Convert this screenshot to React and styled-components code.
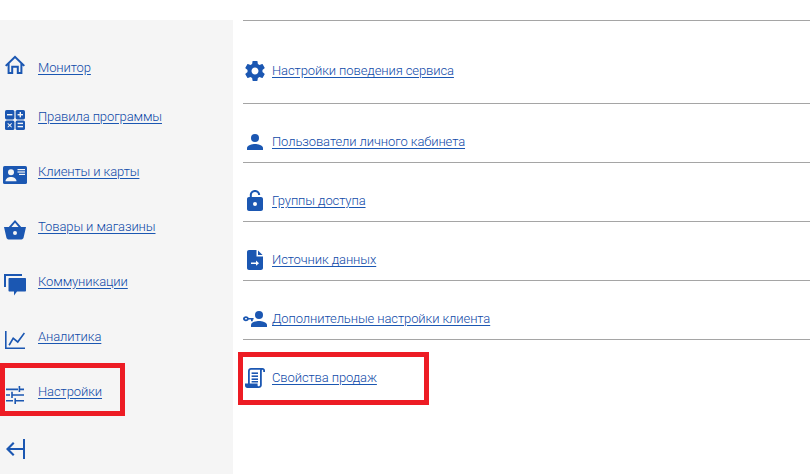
import React from "react";
import styled, { createGlobalStyle } from "styled-components";

const BLUE = "#1b57b2";
const PANEL = "#f5f5f5";

const Global = createGlobalStyle`
  html, body { margin: 0; padding: 0; background: #fff; }
  body { font-family: Roboto, "Liberation Sans", sans-serif; overflow: hidden; }
`;

const Page = styled.div`
  position: relative;
  width: 810px;
  height: 474px;
  display: flex;
  overflow: hidden;
`;

const Sidebar = styled.nav`
  width: 233px;
  height: 454px;
  margin-top: 20px;
  padding-top: 17px;
  box-sizing: border-box;
  background: ${PANEL};
  flex: none;
`;

const NavRow = styled.div`
  height: 55px;
  display: flex;
  align-items: center;
`;

const NavIcon = styled.span`
  width: 30px;
  margin-right: 8px;
  display: flex;
  justify-content: center;
  position: relative;
  top: ${(p) => p.$shift || 0}px;
  flex: none;
  svg { display: block; }
`;

const Link = styled.a`
  font-size: 13px;
  font-weight: 300;
  letter-spacing: -0.1px;
  line-height: 16px;
  color: #0f4aa8;
  text-decoration: underline;
  text-decoration-color: ${BLUE};
  text-underline-offset: 2px;
  position: relative;
  top: ${(p) => p.$shift || 0}px;
  cursor: pointer;
`;

const Main = styled.main`
  flex: 1;
  margin: 20px 0 0 10px;
`;

const MainRow = styled.div`
  height: ${(p) => (p.$first ? 83 : 59)}px;
  border-top: 1px solid #a5a5a5;
  display: flex;
  align-items: flex-end;
  padding-bottom: ${(p) => (p.$first ? 24 : 12)}px;
  box-sizing: border-box;
`;

const RowIcon = styled.span`
  width: 24px;
  height: 24px;
  margin-right: 5px;
  flex: none;
  display: flex;
  align-items: center;
  justify-content: center;
  margin-bottom: ${(p) => p.$lift ?? -4}px;
  svg { display: block; }
`;

const Marker = styled.div`
  position: absolute;
  left: ${(p) => p.$x}px;
  top: ${(p) => p.$y}px;
  width: ${(p) => p.$w}px;
  height: ${(p) => p.$h}px;
  border: 5px solid #ed1c24;
  box-sizing: border-box;
  pointer-events: none;
`;

const Svg = ({ w = 24, h = 24, vb = "0 0 24 24", children }) => (
  <svg width={w} height={h} viewBox={vb} fill={BLUE}>{children}</svg>
);

const HomeIcon = () => (
  <Svg w={20} h={20} vb="0 0 20 20">
    <path d="M10 0.4 L0 10.2 L1.4 11.6 L2.6 10.4 V19 H8.2 V12.8 H11.8 V19 H17.4 V10.4 L18.6 11.6 L20 10.2 Z M10 3.2 L15.4 8.5 V17 H13.8 V10.8 H6.2 V17 H4.6 V8.5 Z" />
  </Svg>
);

const AppsIcon = () => (
  <Svg w={20} h={20} vb="0 0 20 20">
    <rect x="0" y="0" width="9.4" height="9.4" rx="1.6" />
    <rect x="10.6" y="0" width="9.4" height="9.4" rx="1.6" />
    <rect x="0" y="10.6" width="9.4" height="9.4" rx="1.6" />
    <rect x="10.6" y="10.6" width="9.4" height="9.4" rx="1.6" />
    <g fill={PANEL}>
      <rect x="2" y="4" width="5.4" height="1.4" />
      <rect x="12.6" y="4" width="5.4" height="1.4" />
      <rect x="14.6" y="2" width="1.4" height="5.4" />
      <rect x="12.6" y="12.7" width="5.4" height="1.4" />
      <rect x="12.6" y="15.9" width="5.4" height="1.4" />
      <path d="M3 13 L4.7 14.6 L6.4 13 L7 13.7 L5.4 15.3 L7 16.9 L6.4 17.6 L4.7 16 L3 17.6 L2.4 16.9 L4 15.3 L2.4 13.7 Z" />
    </g>
  </Svg>
);

const CardIcon = () => (
  <Svg w={24} h={18} vb="0 0 24 18">
    <rect x="0" y="0" width="24" height="18" rx="1.6" />
    <g fill={PANEL}>
      <circle cx="8" cy="6.2" r="3" />
      <path d="M2.5 15.3 C2.5 12.4 5.4 11 8 11 C10.6 11 13.5 12.4 13.5 15.3 Z" />
      <rect x="14.5" y="3" width="7.5" height="1.2" />
      <rect x="14.5" y="5.4" width="7.5" height="1.2" />
      <rect x="16" y="7.8" width="6" height="1.2" />
    </g>
  </Svg>
);

const BasketIcon = () => (
  <Svg w={22} h={20} vb="0 0 22 20">
    <path d="M11 0 L17.2 7 H22 L19.6 17.6 C19.4 18.7 18.6 19.4 17.5 19.4 H4.5 C3.4 19.4 2.6 18.7 2.4 17.6 L0 7 H4.8 Z M11 2.8 L7.4 7 H14.6 Z" />
    <circle cx="11" cy="13" r="2" fill={PANEL} />
  </Svg>
);

const ChatIcon = () => (
  <Svg w={22} h={22} vb="0 0 22 22">
    <path d="M0 0 H18 V2 H2 V13 H0 Z" />
    <path d="M5.5 4 H21 C21.6 4 22 4.4 22 5 V16.5 C22 17.1 21.6 17.5 21 17.5 H13 L10 21.5 V17.5 H5.5 C4.9 17.5 4.5 17.1 4.5 16.5 V5 C4.5 4.4 4.9 4 5.5 4 Z" />
  </Svg>
);

const ChartIcon = () => (
  <Svg w={20} h={18} vb="0 0 20 18">
    <path d="M0 0 H1.6 V16.4 H20 V18 H0 Z" />
    <path d="M3.4 13.8 L8 6 L12.6 9.8 L18.8 1.6 L20 2.6 L12.9 12.2 L8.4 8.5 L4.8 14.7 Z" />
  </Svg>
);

const SlidersIcon = () => (
  <Svg w={18} h={18} vb="0 0 18 18">
    <path d="M0 2.6 H12 V4.2 H0 Z M14.2 2.6 H18 V4.2 H14.2 Z M12.6 0 H14.2 V6 H12.6 Z" />
    <path d="M0 8.2 H4 V9.8 H0 Z M6.8 8.2 H18 V9.8 H6.8 Z M5.2 5.8 H6.8 V12 H5.2 Z" />
    <path d="M0 14 H7 V15.6 H0 Z M10 14 H18 V15.6 H10 Z M8.4 12.2 H10 V18 H8.4 Z" />
  </Svg>
);

const CollapseIcon = () => (
  <Svg w={20} h={20} vb="0 0 20 20">
    <rect x="18" y="0" width="2" height="20" />
    <path d="M8 3 L9.5 4.5 L5 9 H18 V11 H5 L9.5 15.5 L8 17 L1 10 Z" />
  </Svg>
);

const GearIcon = () => (
  <Svg w={24} h={24}>
    <path d="M19.43 12.98c.04-.32.07-.64.07-.98s-.03-.66-.07-.98l2.11-1.65c.19-.15.24-.42.12-.64l-2-3.46c-.12-.22-.39-.3-.61-.22l-2.49 1c-.52-.4-1.08-.73-1.69-.98l-.38-2.65C14.46 2.18 14.25 2 14 2h-4c-.25 0-.46.18-.49.42l-.38 2.65c-.61.25-1.17.59-1.69.98l-2.49-1c-.23-.09-.49 0-.61.22l-2 3.46c-.13.22-.07.49.12.64l2.11 1.65c-.04.32-.07.65-.07.98s.03.66.07.98l-2.11 1.65c-.19.15-.24.42-.12.64l2 3.46c.12.22.39.3.61.22l2.49-1c.52.4 1.08.73 1.69.98l.38 2.65c.03.24.24.42.49.42h4c.25 0 .46-.18.49-.42l.38-2.65c.61-.25 1.17-.59 1.69-.98l2.49 1c.23.09.49 0 .61-.22l2-3.46c.12-.22.07-.49-.12-.64l-2.11-1.65zM12 15.5c-1.93 0-3.5-1.57-3.5-3.5s1.57-3.5 3.5-3.5 3.5 1.57 3.5 3.5-1.57 3.5-3.5 3.5z" />
  </Svg>
);

const PersonIcon = () => (
  <Svg w={16} h={16} vb="0 0 16 16">
    <circle cx="8" cy="4" r="4" />
    <path d="M0 16 V14 C0 11.3 5.3 10 8 10 C10.7 10 16 11.3 16 14 V16 Z" />
  </Svg>
);

const LockIcon = () => (
  <Svg w={16} h={21} vb="0 0 16 21">
    <path d="M8 0 C5.2 0 2.8 2.2 2.8 5 V7 H2 C0.9 7 0 7.9 0 9 V19 C0 20.1 0.9 21 2 21 H14 C15.1 21 16 20.1 16 19 V9 C16 7.9 15.1 7 14 7 H4.8 V5 C4.8 3.3 6.3 2 8 2 C9.7 2 11.2 3.3 11.2 5 H13.2 C13.2 2.2 10.8 0 8 0 Z" />
    <circle cx="8" cy="14" r="2" fill="#fff" />
  </Svg>
);

const FileIcon = () => (
  <Svg w={16} h={20} vb="0 0 16 20">
    <path d="M2 0 H9.5 V6.5 H16 V18 C16 19.1 15.1 20 14 20 H2 C0.9 20 0 19.1 0 18 V2 C0 0.9 0.9 0 2 0 Z M11 0.5 L15.6 5 H11 Z" />
    <path d="M4 12.4 H9 V10.6 L12 13.2 L9 15.8 V14 H4 Z" fill="#fff" />
  </Svg>
);

const KeyUserIcon = () => (
  <Svg w={24} h={16} vb="0 0 24 16">
    <circle cx="16" cy="4" r="4" />
    <path d="M8 16 V14 C8 11.3 13.3 10 16 10 C18.7 10 24 11.3 24 14 V16 Z" />
    <path d="M3 5.2 C4.2 5.2 5.3 6 5.7 6.9 H10.6 V8.5 H9.8 V10.2 H8 V8.5 H5.7 C5.3 9.5 4.2 10.2 3 10.2 C1.4 10.2 0 9.1 0 7.7 C0 6.3 1.4 5.2 3 5.2 Z M3 6.9 C2.5 6.9 1.9 7.2 1.9 7.7 C1.9 8.2 2.5 8.5 3 8.5 C3.5 8.5 4 8.2 4 7.7 C4 7.2 3.5 6.9 3 6.9 Z" />
  </Svg>
);

const ScrollIcon = () => (
  <Svg w={20} h={20} vb="0 0 20 20">
    <path d="M6 0 H17.5 C18.9 0 20 1 20 2.4 V4 H18.2 V2.6 C18.2 2 17.9 1.8 17.5 1.8 C17 1.8 16.8 2.2 16.8 2.8 V17.2 C16.8 18.8 15.4 20 13.8 20 H2.4 C1 20 0 19 0 17.6 V15.6 H3 V3 C3 1.3 4.3 0 6 0 Z M6.2 1.8 C5.3 1.8 4.8 2.4 4.8 3.2 V15.6 H12.6 V17.6 C12.6 18 12.9 18.3 13.3 18.3 C14.2 18.3 15 17.8 15 17 V2.6 C15 2.3 15.1 2 15.2 1.8 Z" />
    <rect x="6.6" y="4.4" width="6.4" height="1.6" />
    <rect x="6.6" y="7.4" width="6.4" height="1.6" />
    <rect x="6.6" y="10.4" width="6.4" height="1.6" />
    <rect x="6.6" y="13" width="6.4" height="1.5" />
  </Svg>
);

const NAV = [
  { icon: <HomeIcon />, text: "Монитор", shift: 3 },
  { icon: <AppsIcon />, text: "Правила программы", shift: -3 },
  { icon: <CardIcon />, text: "Клиенты и карты", shift: -3 },
  { icon: <BasketIcon />, text: "Товары и магазины", shift: -3 },
  { icon: <ChatIcon />, text: "Коммуникации", shift: -3 },
  { icon: <ChartIcon />, text: "Аналитика", shift: -3 },
  { icon: <SlidersIcon />, text: "Настройки", shift: -3 },
  { icon: <CollapseIcon />, lift: -1 },
];

const ROWS = [
  { icon: <GearIcon />, text: "Настройки поведения сервиса", lift: -4 },
  { icon: <PersonIcon />, text: "Пользователи личного кабинета", lift: -4 },
  { icon: <LockIcon />, text: "Группы доступа", lift: -3 },
  { icon: <FileIcon />, text: "Источник данных", lift: -4 },
  { icon: <KeyUserIcon />, text: "Дополнительные настройки клиента", lift: -4 },
  { icon: <ScrollIcon />, text: "Свойства продаж", lift: -4 },
];

export default function App() {
  return (
    <Page>
      <Global />
      <Sidebar>
        {NAV.map((n, i) => (
          <NavRow key={i}>
            <NavIcon $shift={n.lift}>{n.icon}</NavIcon>
            {n.text && <Link $shift={n.shift}>{n.text}</Link>}
          </NavRow>
        ))}
      </Sidebar>
      <Main>
        {ROWS.map((r, i) => (
          <MainRow key={i} $first={i === 0}>
            <RowIcon $lift={r.lift}>{r.icon}</RowIcon>
            <Link>{r.text}</Link>
          </MainRow>
        ))}
      </Main>
      <Marker $x={0} $y={363} $w={125} $h={53} />
      <Marker $x={238} $y={352} $w={191} $h={53} />
    </Page>
  );
}
